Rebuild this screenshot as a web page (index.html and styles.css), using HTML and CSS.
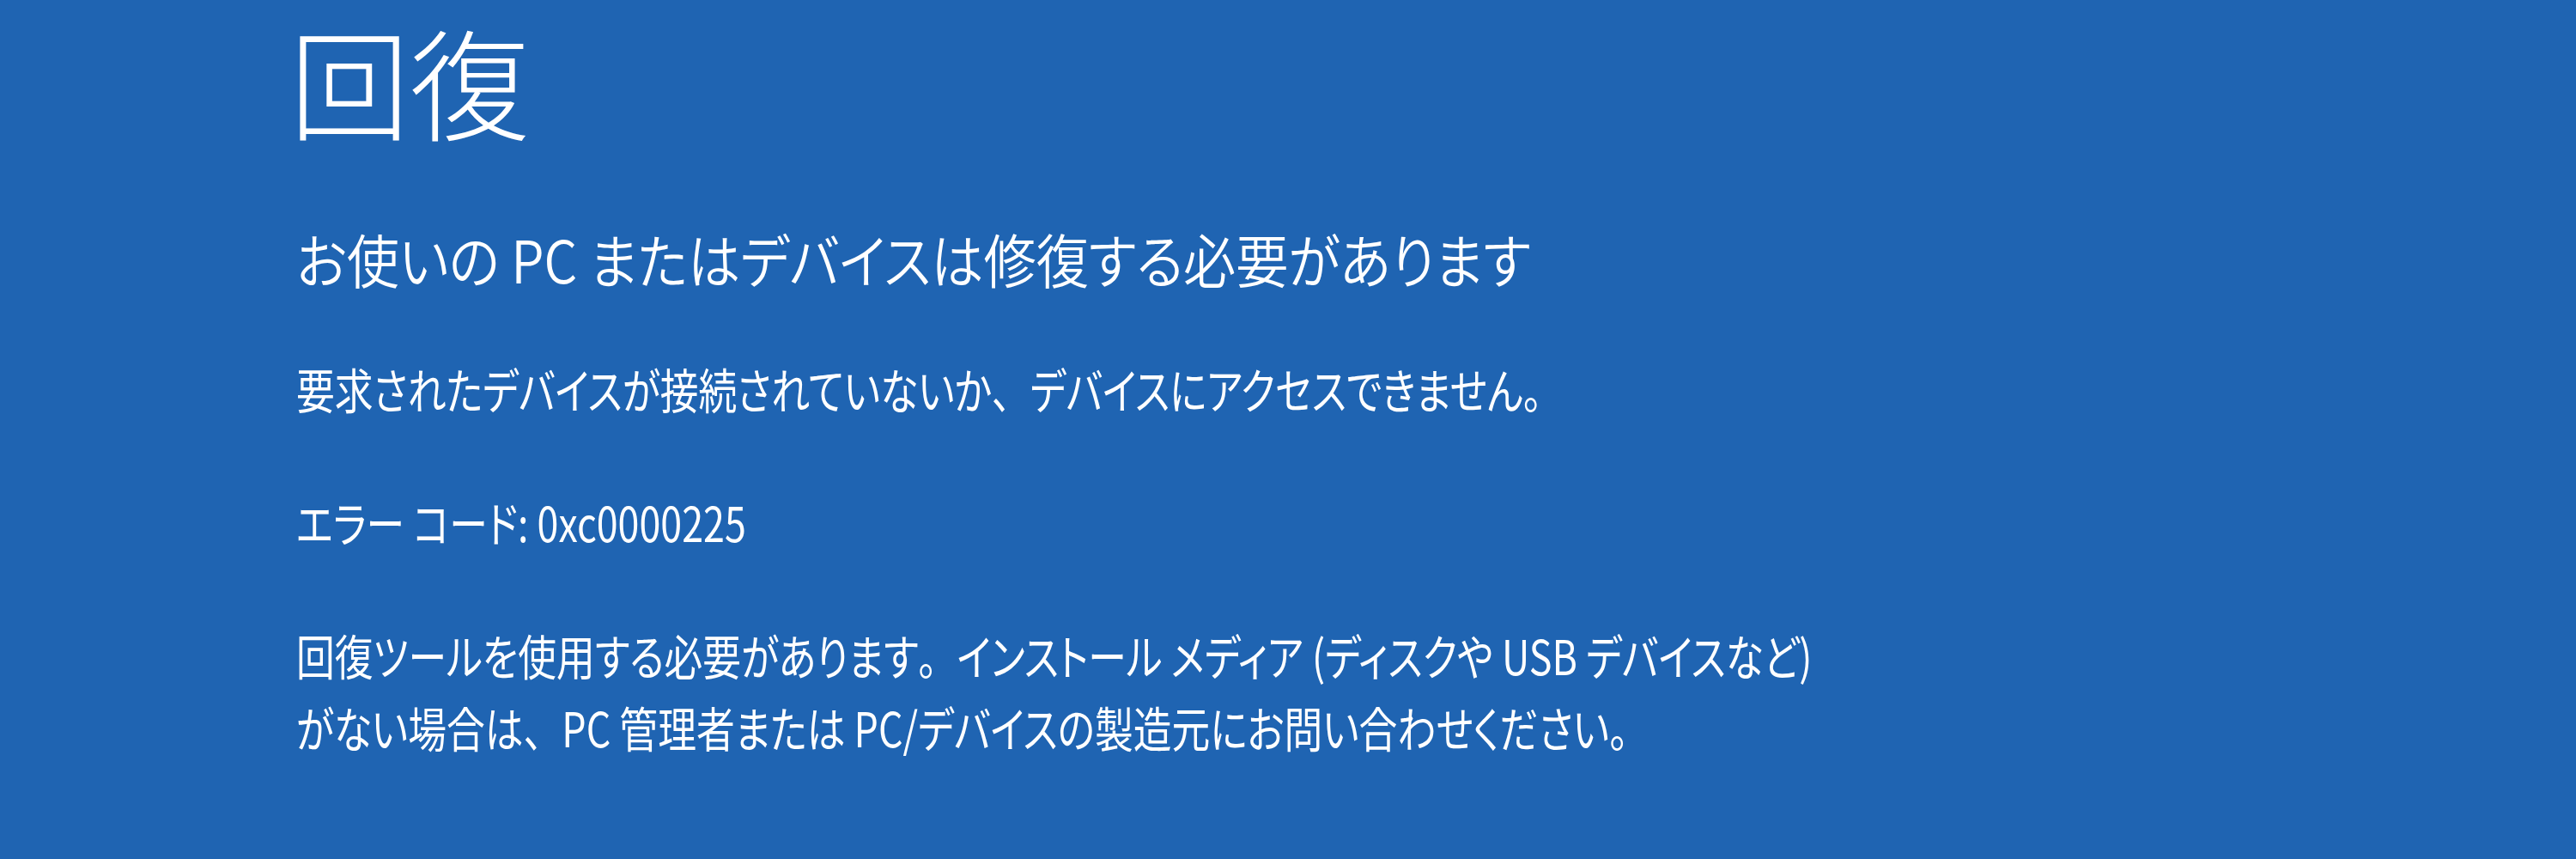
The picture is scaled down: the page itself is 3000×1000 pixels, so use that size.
FILE: index.html
```html
<!DOCTYPE html>
<html lang="ja">
<head>
<meta charset="utf-8">
<title>回復</title>
<link rel="stylesheet" href="styles.css">
</head>
<body>
<main class="screen">
  <h1 class="title">回復</h1>
  <h2 class="heading">お使いの PC またはデバイスは修復する必要があります</h2>
  <p class="text first">要求されたデバイスが接続されていないか<span class="punct">、</span>デバイスにアクセスできません。</p>
  <p class="text">エラー コード: 0xc0000225</p>
  <p class="text">回復ツールを使用する必要があります<span class="punct">。</span>インストール メディア (ディスクや USB デバイスなど)<br>がない場合は<span class="punct">、</span>PC 管理者または PC/デバイスの製造元にお問い合わせください。</p>
</main>
</body>
</html>
```
FILE: styles.css
```css
html, body {
  margin: 0;
  padding: 0;
  background: #1f64b2;
}
.screen {
  box-sizing: border-box;
  width: 3000px;
  height: 1000px;
  padding-left: 345px;
  color: #ffffff;
  font-family: "Noto Sans CJK JP", "Noto Sans", sans-serif;
  font-feature-settings: "palt";
  overflow: hidden;
}
.title {
  margin: 0 0 0 -8px;
  font-size: 140px;
  line-height: 184px;
  font-weight: 300;
}
.heading {
  margin: 67px 0 0 0;
  font-size: 68px;
  line-height: 100px;
  font-weight: 350;
  white-space: nowrap;
  transform: scaleX(0.9);
  transform-origin: left center;
}
.text {
  margin: 71px 0 0 0;
  font-size: 56px;
  line-height: 84px;
  font-weight: 400;
  white-space: nowrap;
  transform: scaleX(0.8);
  transform-origin: left center;
}
.text.first {
  margin-top: 59px;
}
.punct {
  font-feature-settings: normal;
}
```
